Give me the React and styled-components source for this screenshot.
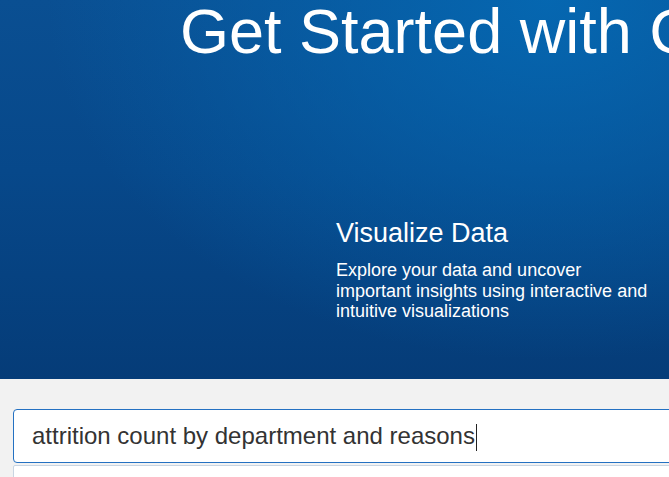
import React from "react";
import styled, { createGlobalStyle } from "styled-components";

const GlobalStyle = createGlobalStyle`
  html, body {
    margin: 0;
    padding: 0;
    background: #f2f2f2;
    overflow: hidden;
  }
  body {
    font-family: "Liberation Sans", Arial, sans-serif;
  }
`;

const Page = styled.div`
  width: 100%;
  height: 477px;
  display: flex;
  flex-direction: column;
  overflow: hidden;
`;

const Hero = styled.section`
  height: 379px;
  flex-shrink: 0;
  display: flex;
  flex-direction: column;
  color: #fff;
  background:
    radial-gradient(ellipse 75% 95% at 82% 0%, rgba(5, 104, 178, 0.95) 0%, rgba(5, 104, 178, 0) 100%),
    linear-gradient(180deg, #0a4f92 0%, #07488a 45%, #053c78 100%);
`;

const Title = styled.h1`
  margin: 0;
  padding-left: 180px;
  font-size: 63px;
  font-weight: 400;
  line-height: 62px;
  white-space: nowrap;
`;

const Feature = styled.div`
  margin: 156px 0 0 336px;
  width: 320px;
  display: flex;
  flex-direction: column;
  gap: 12px;
`;

const FeatureTitle = styled.h2`
  margin: 0;
  font-size: 27px;
  font-weight: 400;
  line-height: 30px;
`;

const FeatureText = styled.p`
  margin: 0;
  font-size: 18px;
  line-height: 20.7px;
`;

const SearchArea = styled.section`
  flex: 1;
  background: #f2f2f2;
  padding: 30px 0 0 13px;
  display: flex;
  flex-direction: column;
  gap: 2px;
`;

const SearchBox = styled.div`
  width: 720px;
  height: 52px;
  box-sizing: content-box;
  border: 1px solid #2471c2;
  border-radius: 4px;
  background: #fff;
  padding-left: 18px;
  display: flex;
  align-items: center;
  font-size: 24px;
  line-height: 52px;
  color: #333;
  white-space: nowrap;
`;

const Caret = styled.span`
  display: inline-block;
  width: 1px;
  height: 27px;
  margin: 2px 0 0 1px;
  background: #222;
`;

const Suggestions = styled.div`
  width: 738px;
  height: 40px;
  border: 1px solid #c9d5e2;
  border-radius: 2px;
  background: #fff;
`;

const App = () => {
  return (
    <Page>
      <GlobalStyle />
      <Hero>
        <Title>Get Started with Copilot</Title>
        <Feature>
          <FeatureTitle>Visualize Data</FeatureTitle>
          <FeatureText>
            Explore your data and uncover important insights using interactive
            and intuitive visualizations
          </FeatureText>
        </Feature>
      </Hero>
      <SearchArea>
        <SearchBox role="textbox">
          attrition count by department and reasons
          <Caret />
        </SearchBox>
        <Suggestions />
      </SearchArea>
    </Page>
  );
};

export default App;
